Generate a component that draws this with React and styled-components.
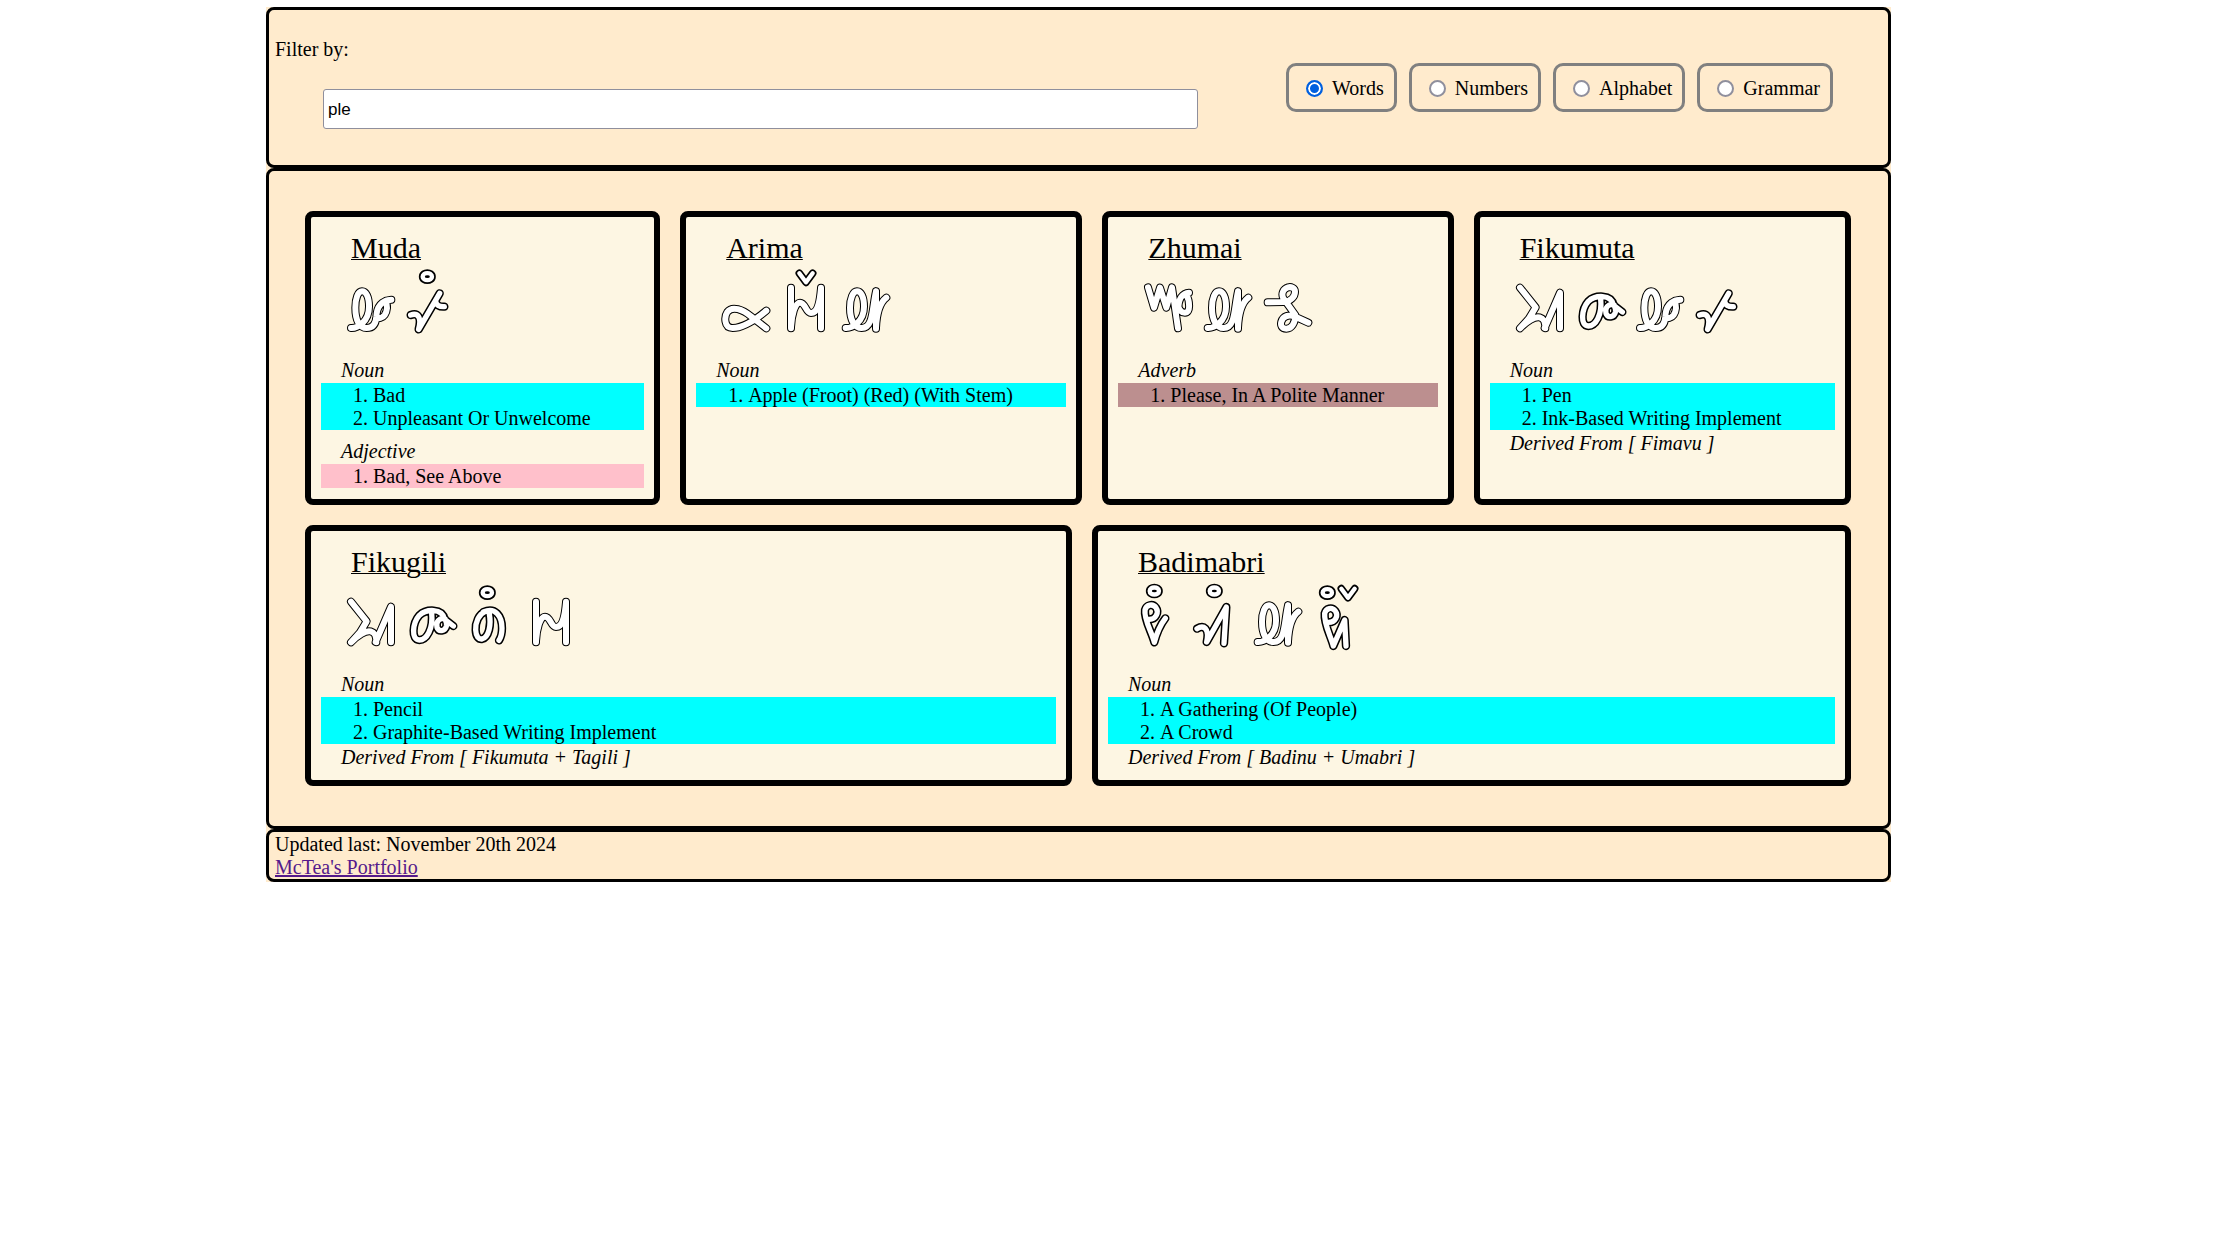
import React, { useState } from "react";
import styled, { createGlobalStyle } from "styled-components";

const GlobalStyle = createGlobalStyle`
  * { box-sizing: border-box; }
  body {
    margin: 0;
    background: #ffffff;
    color: #000000;
    font-family: "Liberation Serif", "Times New Roman", serif;
    font-size: 20px;
    line-height: 23px;
  }
`;

const Page = styled.div`
  display: grid;
  grid-template-columns: 266fr 1625fr 328fr;
  padding-top: 7px;
`;

const Column = styled.div`
  grid-column: 2;
  min-width: 0;
  background: blanchedalmond;
`;

const Header = styled.header`
  display: flex;
  flex-wrap: wrap;
  align-items: center;
  gap: 0 88px;
  padding: 0 55px 0 6px;
  border: 3px solid #000000;
  border-radius: 8px;
`;

const Search = styled.div`
  flex: 1 1 400px;
  display: flex;
  flex-direction: column;
  gap: 28px;
  padding: 28px 0 36px;
`;

const SearchInput = styled.input`
  height: 40px;
  margin-left: 48px;
  padding: 2px 4px 0;
  border: 1px solid #8f8f9d;
  border-radius: 3px;
  background: #ffffff;
  color: #000000;
  font-family: "Liberation Sans", Arial, sans-serif;
  font-size: 17px;
`;

const Choices = styled.div`
  display: flex;
  flex-wrap: wrap;
  gap: 12px;
`;

const Choice = styled.label`
  display: flex;
  align-items: center;
  gap: 9px;
  padding: 11px 10px 9px 17px;
  border: 3px solid #808080;
  border-radius: 10px;
`;

const Radio = styled.input`
  appearance: none;
  width: 17px;
  height: 17px;
  margin: 0;
  border: 2px solid #8f8f9d;
  border-radius: 50%;
  background: #ffffff;

  &:checked {
    border-color: #0060df;
    background: #0060df;
    box-shadow: inset 0 0 0 2px #ffffff;
  }
`;

const Main = styled.main`
  display: flex;
  flex-wrap: wrap;
  gap: 20px;
  padding: 40px 37px 40px 36px;
  border: 3px solid #000000;
  border-radius: 8px;
`;

const Card = styled.article`
  flex: 1 1 auto;
  padding: 13px 10px 11px;
  border: 6px solid #000000;
  border-radius: 8px;
  background: #fdf6e3;
`;

const Title = styled.h2`
  margin: 0 30px;
  font-size: 30px;
  line-height: 35px;
  font-weight: 400;
  text-decoration: underline;
  text-decoration-thickness: 1px;
`;

const Script = styled.div`
  display: flex;
  margin: 0 20px 14px;
`;

const GlyphSvg = styled.svg`
  display: block;
  width: 60px;
  height: 80px;
`;

const Sense = styled.section`
  & + & {
    margin-top: 10px;
  }
`;

const PartOfSpeech = styled.h3`
  margin: 0 20px 1px;
  font-size: 20px;
  line-height: 23px;
  font-weight: 400;
  font-style: italic;
`;

const tones = { Noun: "#00ffff", Adjective: "#ffc0cb", Adverb: "#bc8f8f" };

const Meanings = styled.ol`
  margin: 0;
  padding: 1px 0 0 52px;
  background: ${(p) => tones[p.$kind]};
`;

const Derived = styled.p`
  margin: 2px 20px 0;
  font-style: italic;
`;

const Footer = styled.footer`
  padding: 1px 6px 0;
  border: 3px solid #000000;
  border-radius: 8px;
`;

const Line = styled.div``;

const PortfolioLink = styled.a`
  color: #551a8b;
`;

/* Each glyph is a set of centre lines; "at" is the top left of its 180 x 240 cell. */
const glyphs = {
  mu: {
    at: [123, 180],
    d: "M153 369C172 370 207 350 207 305C207 275 198 259 186 259C174 259 166 280 166 308C166 345 178 369 200 369C222 369 228 352 229 335C230 305 245 286 274 284M256 288C264 300 262 318 254 330C247 340 236 341 229 338",
  },
  ta: {
    at: [303, 180],
    bold: true,
    d: "M356 373L419 265M332 330C352 323 366 334 356 372M433 305C418 306 408 300 407 288",
  },
  a: {
    at: [135, 180],
    d: "M286 317C255 343 215 369 185 369C158 369 160 334 169 321C184 301 215 314 240 334L286 370",
  },
  li: {
    at: [315, 180],
    d: "M360 248V370M450 248V370M360 366C362 330 372 293 387 293C404 293 404 324 420 324C440 324 446 296 450 250",
  },
  ma: {
    at: [495, 180],
    d: "M524 369C543 370 579 350 579 305C579 275 570 259 558 259C546 259 537 280 537 308C537 345 550 369 572 369C608 369 603 310 615 259M615 259V371M646 278C628 292 617 325 615 369",
  },
  zhu: {
    at: [141, 180],
    d: "M171 247L189 308L207 248L226 308L243 247L261 370M294 263C274 264 262 282 262 312M285 267C297 288 299 323 282 323C269 323 263 312 261 298",
  },
  i: {
    at: [501, 180],
    d: "M530 292L577 291C600 290 612 274 612 260C612 248 600 245 591 247C577 251 570 266 577 280L613 330C613 354 602 371 586 371C572 371 568 361 571 350C576 333 594 328 610 334L652 353",
  },
  fi: {
    at: [150, 180],
    d: "M180 248L227 307L207 340L180 370M180 370C200 349 224 334 239 337C253 341 256 352 256 370M254 369L300 263V370",
  },
  ku: {
    at: [330, 180],
    bold: true,
    d: "M422 282C427 330 407 363 385 363C360 363 364 313 385 289C405 270 454 266 461 301L487 321M462 300C446 294 434 308 438 325C443 340 462 337 466 322C468 312 464 302 456 298",
  },
  gi: {
    at: [483, 177],
    bold: true,
    d: "M555 275C536 283 526 307 527 330C528 350 536 358 546 357C567 352 574 314 568 282M550 276C586 260 606 288 606 325C606 342 603 352 597 361",
  },
  ba: {
    at: [207, 177],
    bold: true,
    d: "M268 298C292 300 300 276 291 263C281 250 262 254 258 270C254 298 279 338 286 367C294 336 306 312 319 295",
  },
  di: {
    at: [387, 177],
    bold: true,
    d: "M414 326C434 314 452 324 443 366L502 261L495 370",
  },
  bri: {
    at: [747, 177],
    bold: true,
    d: "M806 307C832 308 838 285 829 273C819 260 801 264 797 280C794 312 816 350 823 378L857 300L861 378",
  },
};

const ring = (x, y) =>
  `M${x - 14} ${y}C${x - 14} ${y - 14} ${x + 14} ${y - 14} ${x + 14} ${y}C${x + 14} ${y + 14} ${x - 14} ${y + 14} ${x - 14} ${y}Z`;
const caret = (x, y) => `M${x - 20} ${y}L${x} ${y + 27}L${x + 20} ${y}`;

const words = [
  {
    name: "Muda",
    script: [["mu"], ["ta", ring(382, 215)]],
    senses: [
      ["Noun", ["Bad", "Unpleasant Or Unwelcome"]],
      ["Adjective", ["Bad, See Above"]],
    ],
  },
  {
    name: "Arima",
    script: [["a"], ["li", caret(405, 205)], ["ma"]],
    senses: [["Noun", ["Apple (Froot) (Red) (With Stem)"]]],
  },
  {
    name: "Zhumai",
    script: [["zhu"], ["ma"], ["i"]],
    senses: [["Adverb", ["Please, In A Polite Manner"]]],
  },
  {
    name: "Fikumuta",
    script: [["fi"], ["ku"], ["mu"], ["ta"]],
    senses: [["Noun", ["Pen", "Ink-Based Writing Implement"]]],
    derived: "Fimavu",
  },
  {
    name: "Fikugili",
    script: [["fi"], ["ku"], ["gi", ring(562, 218)], ["li"]],
    senses: [["Noun", ["Pencil", "Graphite-Based Writing Implement"]]],
    derived: "Fikumuta + Tagili",
  },
  {
    name: "Badimabri",
    script: [
      ["ba", ring(286, 213)],
      ["di", ring(466, 213)],
      ["ma"],
      ["bri", ring(805, 218) + caret(867, 206)],
    ],
    senses: [["Noun", ["A Gathering (Of People)", "A Crowd"]]],
    derived: "Badinu + Umabri",
  },
];

function Glyph({ name, mark }) {
  const { at, d, bold } = glyphs[name];
  const line = { fill: "none", strokeLinecap: "round", strokeLinejoin: "round" };
  return (
    <GlyphSvg viewBox={`${at[0]} ${at[1]} 180 240`} aria-hidden="true">
      <path d={d} {...line} stroke="#000000" strokeWidth={bold ? 25 : 24} />
      <path d={d} {...line} stroke="#ffffff" strokeWidth={bold ? 16 : 18} />
      {mark && <path d={mark} {...line} stroke="#000000" strokeWidth={23} />}
      {mark && <path d={mark} {...line} stroke="#ffffff" strokeWidth={13} />}
    </GlyphSvg>
  );
}

function Word({ word }) {
  return (
    <Card>
      <Title>{word.name}</Title>
      <Script>
        {word.script.map(([name, mark], i) => (
          <Glyph key={i} name={name} mark={mark} />
        ))}
      </Script>
      {word.senses.map(([kind, meanings]) => (
        <Sense key={kind}>
          <PartOfSpeech>{kind}</PartOfSpeech>
          <Meanings $kind={kind}>
            {meanings.map((m) => (
              <li key={m}>{m}</li>
            ))}
          </Meanings>
        </Sense>
      ))}
      {word.derived && <Derived>{`Derived From [ ${word.derived} ]`}</Derived>}
    </Card>
  );
}

export default function App() {
  const [query, setQuery] = useState("ple");
  const [view, setView] = useState("Words");
  return (
    <>
      <GlobalStyle />
      <Page>
        <Column>
          <Header>
            <Search>
              <label htmlFor="filter">Filter by:</label>
              <SearchInput
                id="filter"
                type="text"
                value={query}
                onChange={(e) => setQuery(e.target.value)}
              />
            </Search>
            <Choices role="radiogroup" aria-label="View">
              {["Words", "Numbers", "Alphabet", "Grammar"].map((v) => (
                <Choice key={v}>
                  <Radio
                    type="radio"
                    name="view"
                    value={v}
                    checked={view === v}
                    onChange={() => setView(v)}
                  />
                  {v}
                </Choice>
              ))}
            </Choices>
          </Header>
          <Main>
            {words.map((w) => (
              <Word key={w.name} word={w} />
            ))}
          </Main>
          <Footer>
            <Line>Updated last: November 20th 2024</Line>
            <Line>
              <PortfolioLink href="#portfolio">McTea's Portfolio</PortfolioLink>
            </Line>
          </Footer>
        </Column>
      </Page>
    </>
  );
}
